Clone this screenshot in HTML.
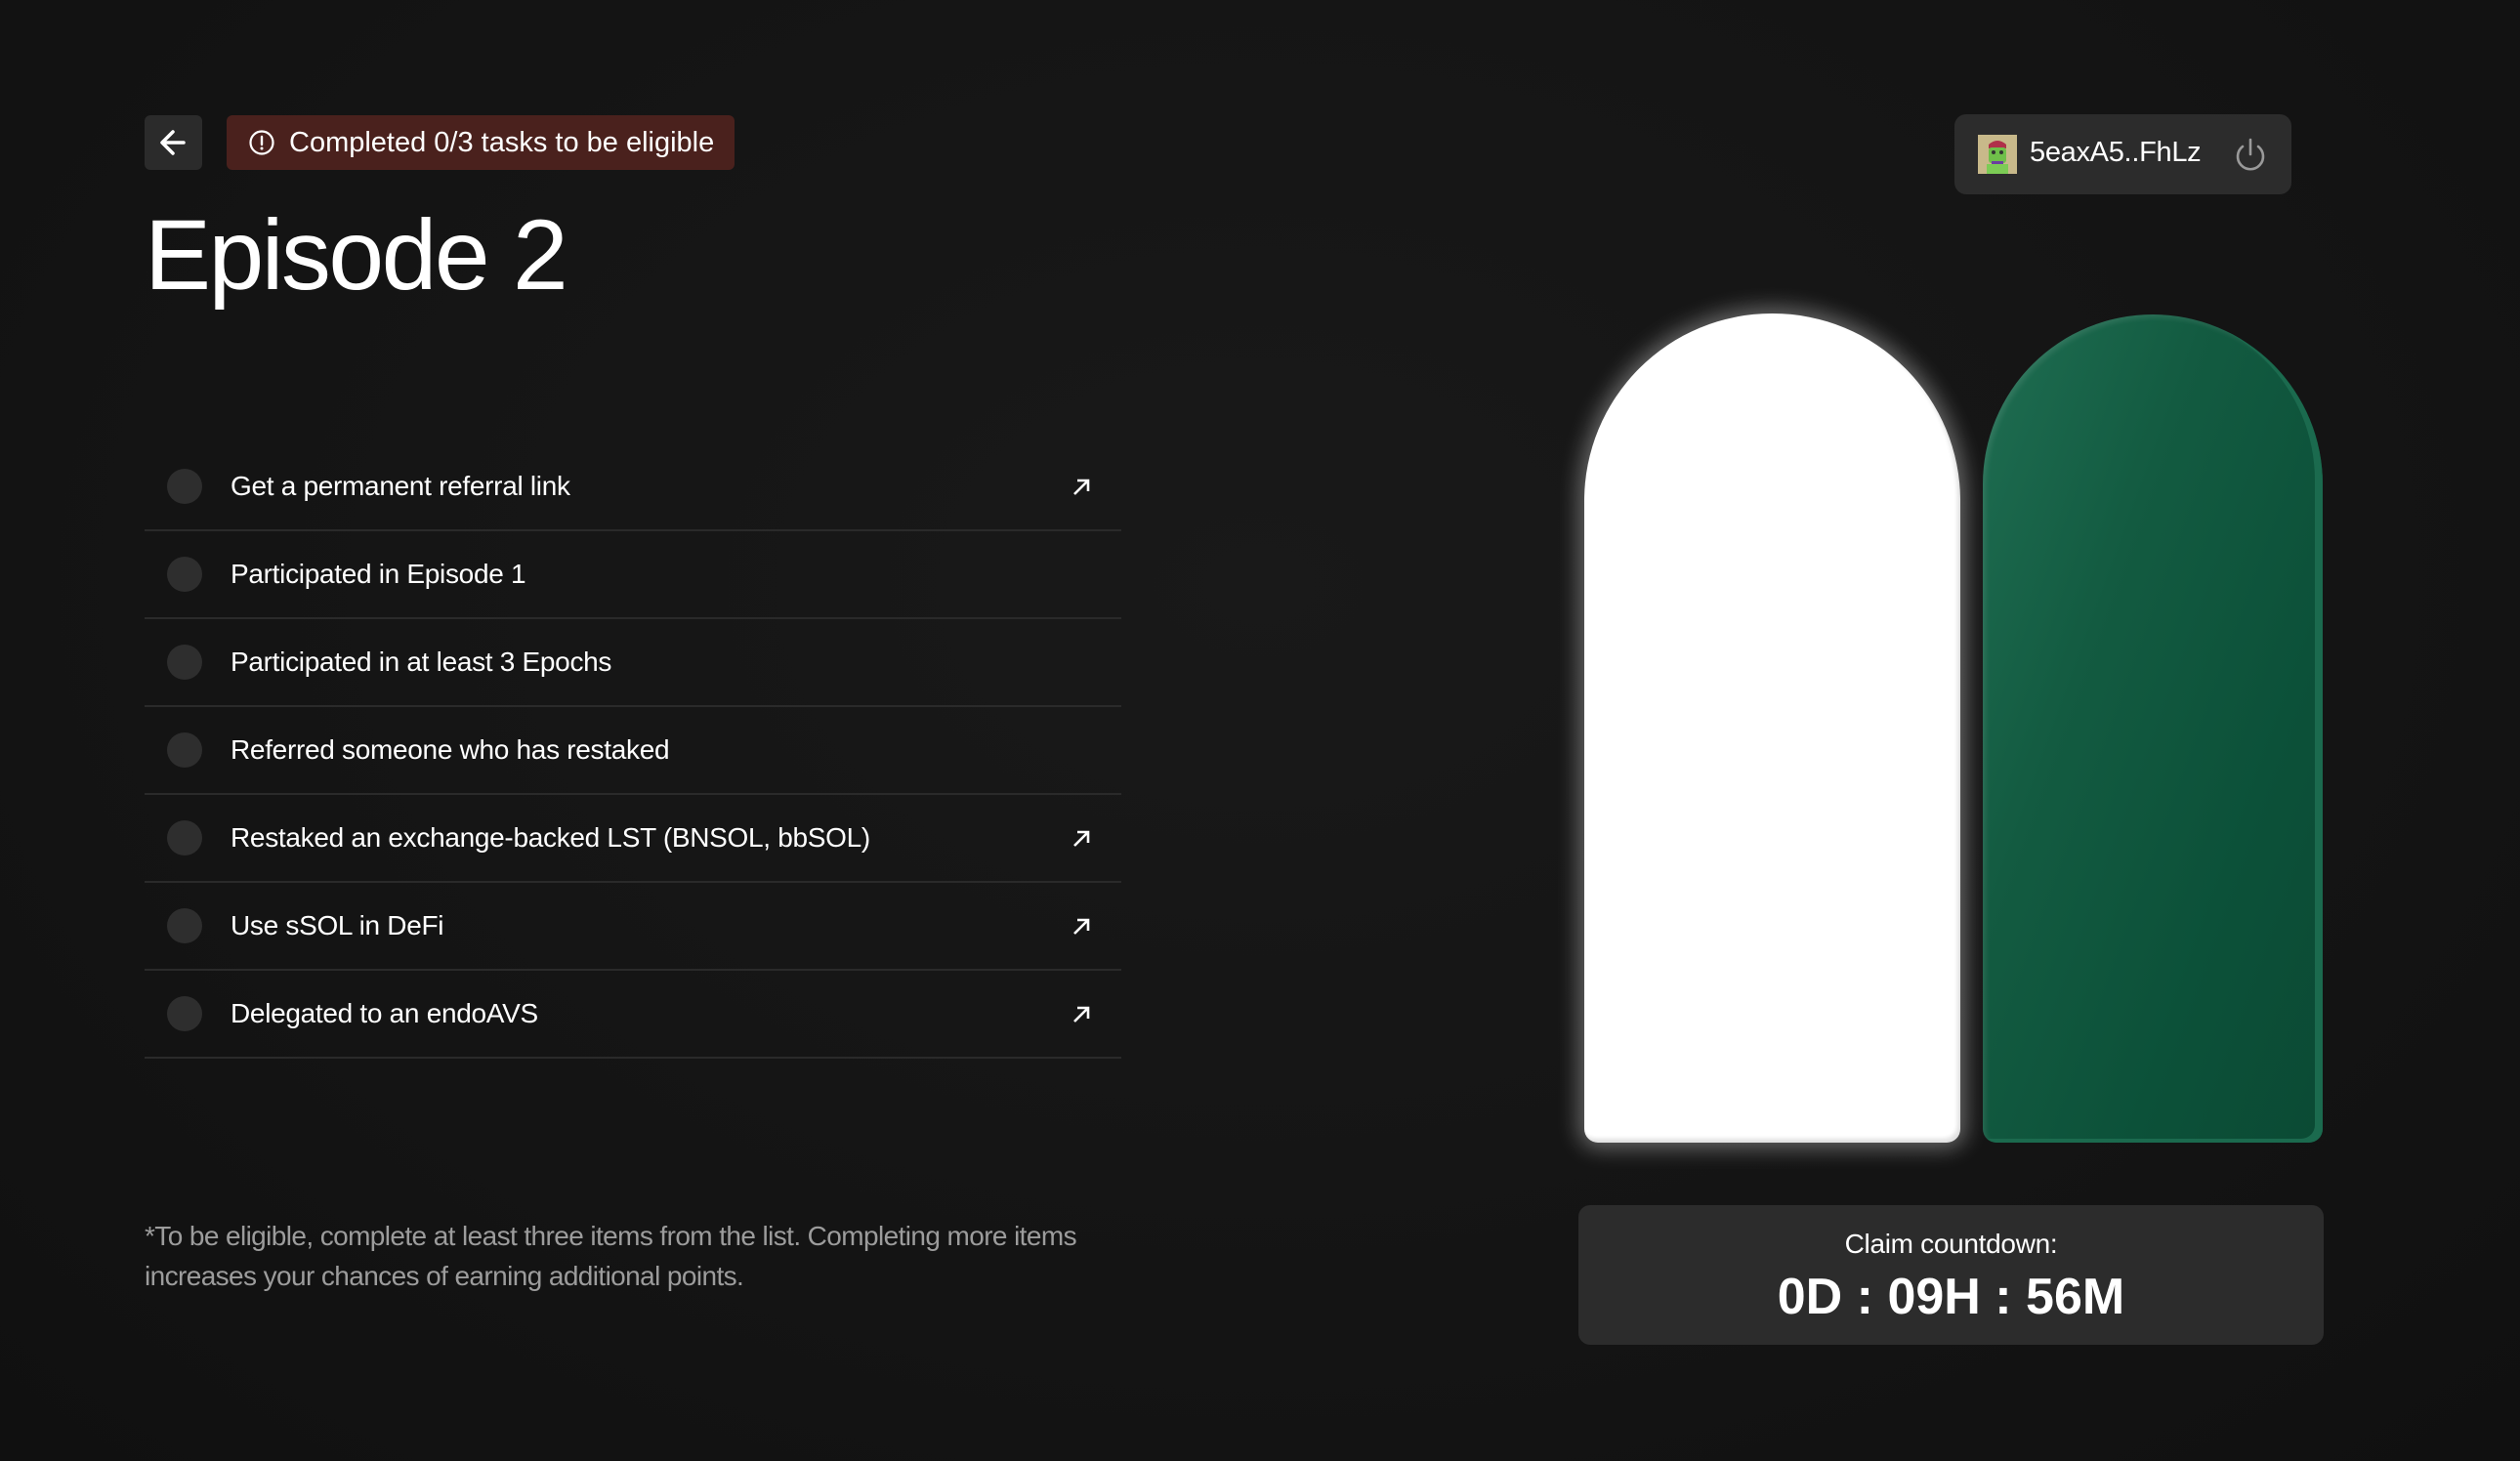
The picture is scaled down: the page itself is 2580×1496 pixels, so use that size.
<!DOCTYPE html>
<html><head><meta charset="utf-8"><style>
*{margin:0;padding:0;box-sizing:border-box}
html,body{width:2580px;height:1496px;overflow:hidden}
body{background:radial-gradient(ellipse at 50% 40%,#191919 0%,#141414 60%,#101010 100%);font-family:"Liberation Sans",sans-serif;color:#fff;position:relative}
.abs{position:absolute}
.back{left:148px;top:118px;width:59px;height:56px;background:#2b2b2b;border-radius:6px}
.badge{left:232px;top:118px;width:520px;height:56px;background:#4a211d;border-radius:6px;display:flex;align-items:center;padding-left:22px;font-size:29px}
.badge svg{margin-right:14px}
h1{position:absolute;left:148px;top:200px;font-size:102px;font-weight:400;letter-spacing:-2.5px;line-height:1.2}
.list{left:148px;top:454px;width:1000px}
.row{height:90px;border-bottom:2px solid #2a2a2a;display:flex;align-items:center;position:relative}
.dot{width:36px;height:36px;border-radius:50%;background:#2e2e2e;margin-left:23px;margin-right:29px}
.row span{font-size:28px;letter-spacing:-0.3px}
.arr{position:absolute;right:30px;top:34px}
.foot{left:148px;top:1245px;width:1040px;font-size:28px;line-height:41px;color:#9c9c9c;letter-spacing:-0.6px}
.wallet{left:2001px;top:117px;width:345px;height:82px;background:#2c2c2c;border-radius:12px}
.av{left:2025px;top:138px;width:40px;height:40px;background:#c8b98a;overflow:hidden}
.wtxt{left:2078px;top:140px;font-size:29px;letter-spacing:-0.3px}
.white{left:1622px;top:321px;width:385px;height:849px;background:#fff;border-radius:192px 192px 14px 14px;box-shadow:0 0 22px 6px rgba(255,255,255,0.35),inset -3px -4px 4px rgba(0,0,0,0.12)}
.green{left:2030px;top:322px;width:348px;height:848px;border-radius:174px 174px 14px 14px;background:linear-gradient(110deg,#1f6e52 0%,#135b41 35%,#0c5139 70%,#0b4a34 100%);box-shadow:inset -8px -4px 0 #1b6a4e,inset 3px 3px 6px rgba(255,255,255,0.1)}
.cd{left:1616px;top:1234px;width:763px;height:143px;background:#2c2c2c;border-radius:12px;text-align:center}
.cd .l{font-size:28px;margin-top:24px;letter-spacing:-0.3px}
.cd .t{font-size:52px;font-weight:700;margin-top:8px}
</style></head><body>
<div class="abs back"><svg width="59" height="56" viewBox="0 0 59 56"><path d="M40 28H19M29 17L18 28L29 39" stroke="#fff" stroke-width="3.5" fill="none" stroke-linecap="round" stroke-linejoin="round"/></svg></div>
<div class="abs badge"><svg width="28" height="28" viewBox="0 0 28 28"><circle cx="14" cy="14" r="11.5" stroke="#fff" stroke-width="2.2" fill="none"/><path d="M14 8v8" stroke="#fff" stroke-width="2.4" stroke-linecap="round"/><circle cx="14" cy="20" r="1.5" fill="#fff"/></svg>Completed 0/3 tasks to be eligible</div>
<h1>Episode 2</h1>
<div class="abs list">
<div class="row"><div class="dot"></div><span>Get a permanent referral link</span><svg class="arr" width="22" height="22" viewBox="0 0 22 22"><path d="M4 18L18 4M7 4h11v11" stroke="#fff" stroke-width="2.6" fill="none"/></svg></div>
<div class="row"><div class="dot"></div><span>Participated in Episode 1</span></div>
<div class="row"><div class="dot"></div><span>Participated in at least 3 Epochs</span></div>
<div class="row"><div class="dot"></div><span>Referred someone who has restaked</span></div>
<div class="row"><div class="dot"></div><span>Restaked an exchange-backed LST (BNSOL, bbSOL)</span><svg class="arr" width="22" height="22" viewBox="0 0 22 22"><path d="M4 18L18 4M7 4h11v11" stroke="#fff" stroke-width="2.6" fill="none"/></svg></div>
<div class="row"><div class="dot"></div><span>Use sSOL in DeFi</span><svg class="arr" width="22" height="22" viewBox="0 0 22 22"><path d="M4 18L18 4M7 4h11v11" stroke="#fff" stroke-width="2.6" fill="none"/></svg></div>
<div class="row"><div class="dot"></div><span>Delegated to an endoAVS</span><svg class="arr" width="22" height="22" viewBox="0 0 22 22"><path d="M4 18L18 4M7 4h11v11" stroke="#fff" stroke-width="2.6" fill="none"/></svg></div>
</div>
<div class="abs foot">*To be eligible, complete at least three items from the list. Completing more items increases your chances of earning additional points.</div>
<div class="abs wallet"></div>
<div class="abs av"><svg width="40" height="40" viewBox="0 0 40 40"><path d="M11 10q9-8 18 0v4H11z" fill="#b0304a"/><rect x="11" y="13" width="18" height="16" rx="3" fill="#6fbf4a"/><circle cx="16" cy="18" r="2" fill="#333"/><circle cx="24" cy="18" r="2" fill="#333"/><rect x="14" y="27" width="12" height="3" fill="#6b3fa0"/><rect x="9" y="30" width="22" height="10" fill="#7ccc55"/></svg></div>
<div class="abs wtxt">5eaxA5..FhLz</div>
<svg class="abs" style="left:2286px;top:140px" width="36" height="38" viewBox="0 0 36 38"><path d="M10 10a13 13 0 1 0 16 0" stroke="#9a9a9a" stroke-width="2.6" fill="none" stroke-linecap="round"/><path d="M18 3v15" stroke="#9a9a9a" stroke-width="2.6" stroke-linecap="round"/></svg>
<div class="abs white"></div>
<div class="abs green"></div>
<div class="abs cd"><div class="l">Claim countdown:</div><div class="t">0D : 09H : 56M</div></div>
</body></html>
